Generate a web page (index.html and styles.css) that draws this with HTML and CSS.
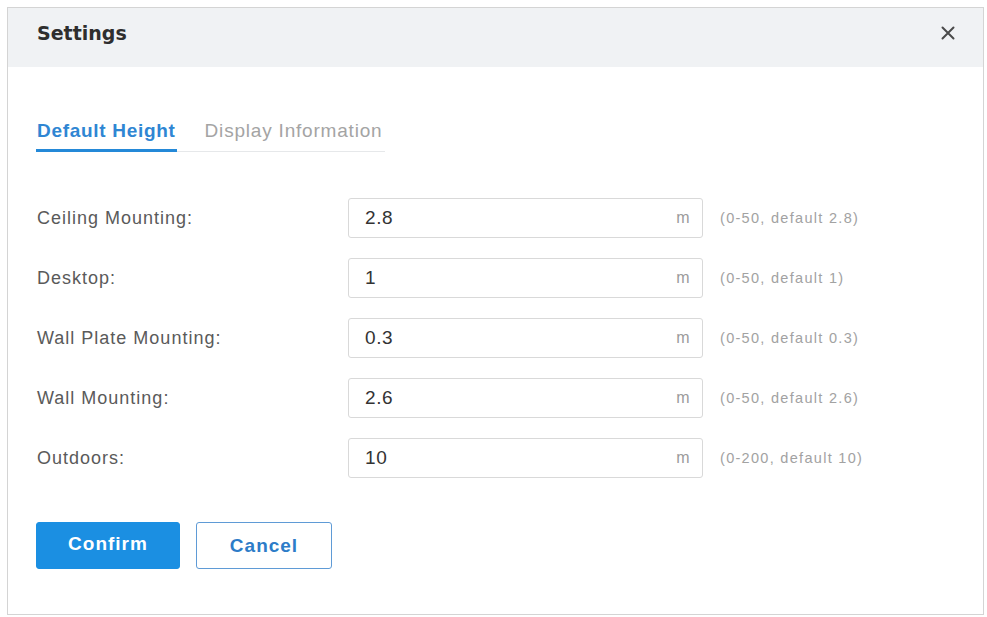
FILE: index.html
```html
<!DOCTYPE html>
<html lang="en">
<head>
<meta charset="utf-8">
<title>Settings</title>
<link rel="stylesheet" href="styles.css">
</head>
<body>
<div class="dialog">
  <div class="dialog-header">
    <span class="dialog-title">Settings</span>
    <button class="close-btn" aria-label="Close">
      <svg width="14" height="14" viewBox="0 0 14 14"><path d="M1.5 1.5 L12.5 12.5 M12.5 1.5 L1.5 12.5" stroke="#4a4a4a" stroke-width="2" stroke-linecap="round"/></svg>
    </button>
  </div>
  <div class="dialog-body">
    <div class="tabs">
      <div class="tab tab-active">Default Height</div>
      <div class="tab">Display Information</div>
    </div>
    <div class="form">
      <div class="row">
        <label class="label">Ceiling Mounting:</label>
        <div class="input"><span class="value">2.8</span><span class="unit">m</span></div>
        <span class="hint">(0-50, default 2.8)</span>
      </div>
      <div class="row">
        <label class="label">Desktop:</label>
        <div class="input"><span class="value">1</span><span class="unit">m</span></div>
        <span class="hint">(0-50, default 1)</span>
      </div>
      <div class="row">
        <label class="label">Wall Plate Mounting:</label>
        <div class="input"><span class="value">0.3</span><span class="unit">m</span></div>
        <span class="hint">(0-50, default 0.3)</span>
      </div>
      <div class="row">
        <label class="label">Wall Mounting:</label>
        <div class="input"><span class="value">2.6</span><span class="unit">m</span></div>
        <span class="hint">(0-50, default 2.6)</span>
      </div>
      <div class="row">
        <label class="label">Outdoors:</label>
        <div class="input"><span class="value">10</span><span class="unit">m</span></div>
        <span class="hint">(0-200, default 10)</span>
      </div>
    </div>
    <div class="actions">
      <button class="btn btn-primary">Confirm</button>
      <button class="btn btn-secondary">Cancel</button>
    </div>
  </div>
</div>
</body>
</html>
```
FILE: styles.css
```css
* { box-sizing: border-box; }
html, body { margin: 0; padding: 0; background: #ffffff; }
body {
  font-family: "Liberation Sans", Arial, sans-serif;
  padding: 7px 0 0 7px;
}
.dialog {
  width: 977px;
  height: 608px;
  border: 1px solid #d4d4d4;
  background: #fff;
  display: flex;
  flex-direction: column;
}
.dialog-header {
  height: 59px;
  background: #f0f2f4;
  display: flex;
  align-items: flex-start;
  justify-content: space-between;
  padding: 13px 28px 0 29px;
}
.dialog-title {
  font-family: "DejaVu Sans", Verdana, sans-serif;
  font-weight: bold;
  font-size: 19px;
  line-height: 24px;
  color: #2e2e2e;
}
.close-btn {
  border: 0;
  background: transparent;
  padding: 0;
  margin-top: 5px;
  width: 14px;
  height: 14px;
  display: flex;
  cursor: pointer;
}
.dialog-body {
  padding: 52px 28px 0 28px;
}
.tabs {
  display: flex;
  width: 349px;
  border-bottom: 1px solid #e6e8ea;
  gap: 27px;
}
.tab {
  font-size: 19px;
  letter-spacing: 0.8px;
  line-height: 24px;
  padding: 0 1px 6px 1px;
  margin-bottom: -1px;
  border-bottom: 3px solid transparent;
  color: #a4a4a4;
}
.tab-active {
  color: #2f86d3;
  font-weight: bold;
  border-bottom-color: #2489d8;
  letter-spacing: 0.7px;
}
.form {
  margin-top: 46px;
  display: flex;
  flex-direction: column;
  gap: 20px;
}
.row {
  display: flex;
  align-items: center;
  height: 40px;
}
.label {
  width: 312px;
  padding-left: 1px;
  font-size: 18px;
  letter-spacing: 1px;
  color: #5a5a5a;
}
.input {
  width: 355px;
  height: 40px;
  border: 1px solid #d9d9d9;
  border-radius: 3px;
  display: flex;
  align-items: center;
  justify-content: space-between;
  padding: 0 12px 0 16px;
}
.value {
  font-size: 19px;
  color: #333;
  letter-spacing: 0.6px;
}
.unit {
  font-size: 16px;
  color: #9b9b9b;
  letter-spacing: 0.5px;
}
.hint {
  margin-left: 17px;
  font-size: 14.5px;
  letter-spacing: 1.3px;
  color: #a2a2a2;
}
.actions {
  margin-top: 44px;
  display: flex;
  gap: 16px;
}
.btn {
  height: 47px;
  border-radius: 3px;
  font-family: "Liberation Sans", Arial, sans-serif;
  font-weight: bold;
  font-size: 19px;
  letter-spacing: 1px;
  cursor: pointer;
}
.btn-primary {
  width: 144px;
  background: #1b8fe2;
  border: 1px solid #1b8fe2;
  color: #ffffff;
  padding-bottom: 5px;
}
.btn-secondary {
  width: 136px;
  background: #ffffff;
  border: 1px solid #5f9bd6;
  color: #2d7cc8;
  padding-top: 2px;
}
```
